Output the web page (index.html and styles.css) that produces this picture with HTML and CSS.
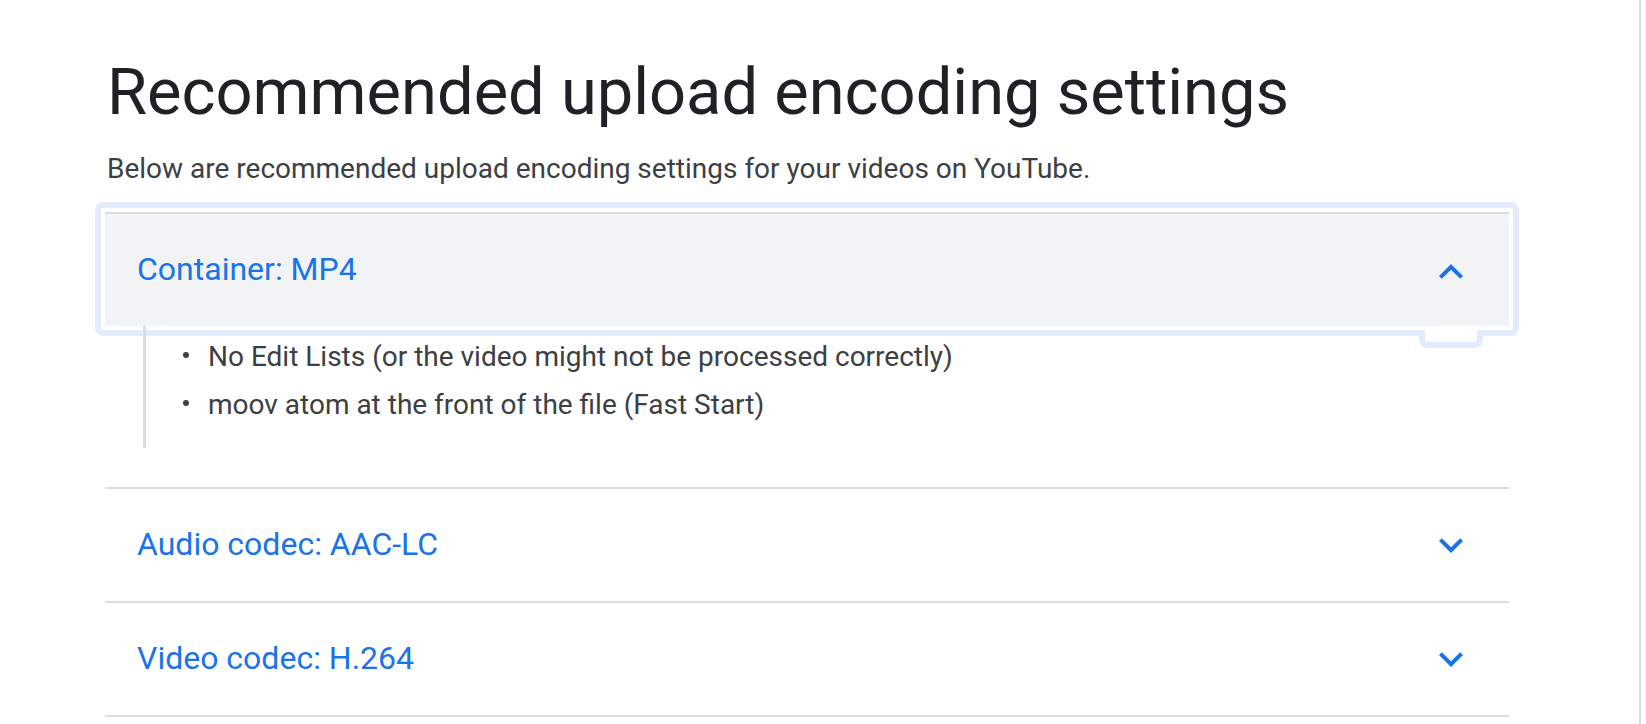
FILE: index.html
```html
<!DOCTYPE html>
<html lang="en">
<head>
    <meta charset="UTF-8">
    <meta name="viewport" content="width=device-width, initial-scale=1.0">
    <title>Recommended upload encoding settings</title>
    <link rel="stylesheet" href="styles.css">
</head>
<body>
    <div class="layout">
        <main class="article">
            <h1>Recommended upload encoding settings</h1>
            <p class="intro">Below are recommended upload encoding settings for your videos on YouTube.</p>

            <div class="accordion">
                <!-- Expanded item, has keyboard focus -->
                <section class="acc-item open">
                    <button class="acc-head focused" type="button">
                        <span class="acc-title">Container: MP4</span>
                        <svg class="chevron up" viewBox="0 0 24 24" width="48" height="48"><path d="M12 8l-6 6 1.41 1.41L12 10.83l4.59 4.58L18 14z"/></svg>
                    </button>
                    <div class="acc-body">
                        <ul class="acc-list">
                            <li>No Edit Lists (or the video might not be processed correctly)</li>
                            <li>moov atom at the front of the file (Fast Start)</li>
                        </ul>
                    </div>
                </section>

                <section class="acc-item">
                    <button class="acc-head" type="button">
                        <span class="acc-title">Audio codec: AAC-LC</span>
                        <svg class="chevron" viewBox="0 0 24 24" width="48" height="48"><path d="M16.59 8.59L12 13.17 7.41 8.59 6 10l6 6 6-6z"/></svg>
                    </button>
                </section>

                <section class="acc-item">
                    <button class="acc-head" type="button">
                        <span class="acc-title">Video codec: H.264</span>
                        <svg class="chevron" viewBox="0 0 24 24" width="48" height="48"><path d="M16.59 8.59L12 13.17 7.41 8.59 6 10l6 6 6-6z"/></svg>
                    </button>
                </section>
            </div>
        </main>
        <div class="scroll-edge"></div>
    </div>
</body>
</html>
```

FILE: styles.css
```css
body {
    margin: 0;
    font-family: Roboto, 'Liberation Sans', sans-serif;
    color: #3c4043;
    background-color: #fff;
}

.layout {
    display: flex;
    justify-content: space-between;
    min-height: 100vh;
}

.article {
    width: 1404px;
    padding-left: 105px;
}

.scroll-edge {
    width: 5px;
    border-left: 2px solid #dadce0;
}

h1 {
    margin: 54px 0 0;
    padding-left: 2px;
    font-size: 65px;
    line-height: 76px;
    font-weight: 400;
    color: #202124;
}

.intro {
    margin: 19px 0 23px;
    padding-left: 2px;
    font-size: 28px;
    line-height: 40px;
}

/* accordion */

.acc-item {
    border-top: 2px solid #dadce0;
}

.acc-item:last-child {
    border-bottom: 2px solid #dadce0;
}

.acc-head {
    position: relative;
    display: flex;
    align-items: center;
    justify-content: space-between;
    width: 100%;
    height: 112px;
    margin: 0;
    padding: 0 34px 3px 32px;
    border: none;
    background: none;
    font-family: inherit;
    cursor: pointer;
    text-align: left;
}

.open .acc-head {
    background-color: #f1f3f4;
}

.acc-title {
    font-size: 32px;
    color: #1a73e8;
}

.chevron {
    fill: #1a73e8;
    margin-top: 3px;
}

.chevron.up {
    margin-top: 7px;
}

/* focus ring, plus the small tab hanging under it */
.focused::before {
    content: '';
    position: absolute;
    top: -12px;
    left: -10px;
    right: -10px;
    bottom: -10px;
    border: 6px solid #e3ecfd;
    border-radius: 8px;
}

.focused::after {
    content: '';
    position: absolute;
    top: 116px;
    right: 26px;
    width: 64px;
    height: 18px;
    box-sizing: border-box;
    border: 6px solid #e3ecfd;
    border-top: none;
    border-radius: 0 0 8px 8px;
    background-color: #fff;
}

.acc-body {
    position: relative;
    z-index: 1;
    padding-bottom: 39px;
}

.acc-list {
    margin: 0 0 0 38px;
    padding: 11px 0 23px 62px;
    border-left: 3px solid #dadce0;
    list-style: none;
}

.acc-list li {
    position: relative;
    font-size: 28px;
    line-height: 40px;
}

.acc-list li + li {
    margin-top: 8px;
}

.acc-list li::before {
    content: '';
    position: absolute;
    left: -25px;
    top: 15px;
    width: 6px;
    height: 6px;
    border-radius: 50%;
    background-color: #3c4043;
}
```
